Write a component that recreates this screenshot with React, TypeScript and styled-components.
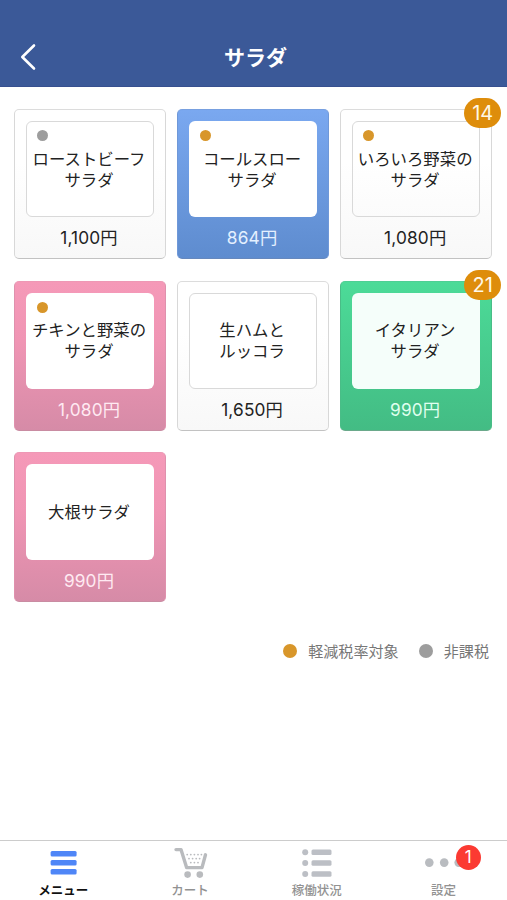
import React from "react";
import styled, { createGlobalStyle, css } from "styled-components";

type Tone = "white" | "blue" | "pink" | "green";
type Tax = "reduced" | "exempt";

const GlobalStyle = createGlobalStyle`
  * { box-sizing: border-box; }
  body {
    margin: 0;
    background: #fff;
    font-family: Inter, "Noto Sans CJK JP", sans-serif;
  }
`;

const Screen = styled.div`
  width: 507px;
  height: 900px;
  display: flex;
  flex-direction: column;
  background: #fff;
  overflow: hidden;
`;

const Header = styled.header`
  height: 87px;
  flex: none;
  display: grid;
  grid-template-columns: 60px 1fr 56px;
  align-items: center;
  padding-top: 27px;
  background: #3b5998;
  border-bottom: 1px solid #37508f;
`;

const BackButton = styled.button`
  display: flex;
  border: 0;
  padding: 0 0 0 19px;
  background: none;
`;

const Title = styled.h1`
  margin: 0;
  padding-bottom: 2px;
  text-align: center;
  color: #fff;
  font-size: 21px;
  line-height: 30px;
  font-weight: 700;
  font-family: "Noto Sans CJK JP", sans-serif;
`;

const Main = styled.main`
  flex: 1;
  padding: 22px 15px 0 14px;
`;

const Grid = styled.div`
  display: grid;
  grid-template-columns: repeat(3, 152px);
  grid-auto-rows: 150px;
  gap: 21.6px 11.1px;
`;

const tones = {
  white: css`
    background: linear-gradient(#fff 35%, #f8f8f8);
    border-color: #dcdcdc #d8d8d8 #c2c2c2;
    color: #222;
  `,
  blue: css`
    background: linear-gradient(#7aa8f0, #5e8ccf);
    border-color: #78a0e0 #6f98d8 #6688bd;
    color: #e4f0ff;
  `,
  pink: css`
    background: linear-gradient(#f599b8, #f095b4 40%, #d68ba7);
    border-color: #ee98b5 #df91ad #c98ca2;
    color: #ffeaf2;
  `,
  green: css`
    background: linear-gradient(#4cdb98, #43bc84);
    border-color: #4fcf94 #49bd87 #6aa98b;
    color: #e0ffef;
  `,
};

const Card = styled.article<{ $tone: Tone }>`
  position: relative;
  display: flex;
  flex-direction: column;
  align-items: center;
  padding-top: 11px;
  border: 1px solid;
  border-bottom-width: 1.5px;
  border-radius: 5px;
  ${({ $tone }) => tones[$tone]}
`;

const Label = styled.div<{ $tone: Tone; $sheer?: boolean }>`
  position: relative;
  width: 128px;
  height: 96px;
  flex: none;
  display: flex;
  align-items: center;
  justify-content: center;
  padding: 0 2px 1px 0;
  text-align: center;
  white-space: pre;
  color: #222;
  font-family: "Noto Sans CJK JP", sans-serif;
  font-size: 16.4px;
  line-height: 21px;
  border-radius: 6px;
  border: 1px solid ${({ $tone }) => ($tone === "white" ? "#d9d9d9" : "transparent")};
  background: ${({ $tone, $sheer }) =>
    $sheer ? "transparent" : $tone === "green" ? "#f5fefa" : "#fff"};
  background-clip: border-box;
`;

const Dot = styled.span<{ $tax: Tax; $size: number }>`
  flex: none;
  width: ${({ $size }) => $size}px;
  height: ${({ $size }) => $size}px;
  border-radius: 50%;
  background: ${({ $tax }) => ($tax === "reduced" ? "#d8962a" : "#9d9d9d")};
`;

const DotCorner = styled.span`
  position: absolute;
  top: 8px;
  left: 9.5px;
  display: flex;
`;

const Price = styled.div`
  margin-top: 9px;
  padding-right: 2px;
  font-size: 17.3px;
  line-height: 24px;
  letter-spacing: 0.15px;
`;

const Count = styled.span`
  position: absolute;
  top: -12px;
  right: -10px;
  width: 37px;
  height: 30px;
  border-radius: 15px;
  background: #de8d0b;
  color: #fff8e8;
  text-align: center;
  font-size: 20px;
  line-height: 30px;
`;

const Legend = styled.div`
  display: flex;
  align-items: center;
  justify-content: flex-end;
  height: 24px;
  margin-top: 37px;
  padding-right: 3px;
  color: #777;
  font-family: "Noto Sans CJK JP", sans-serif;
  font-size: 15.1px;
  line-height: 22px;
`;

const LegendItem = styled.span`
  display: flex;
  align-items: center;
  gap: 11px;
  margin-left: 20px;
`;

const LegendText = styled.span`
  padding-bottom: 2px;
`;

const TabBar = styled.nav`
  flex: none;
  height: 60px;
  display: grid;
  grid-template-columns: repeat(4, 1fr);
  border-top: 1px solid #ccc;
  background: #fff;
`;

const Tab = styled.button<{ $active?: boolean }>`
  display: flex;
  flex-direction: column;
  align-items: center;
  padding: 4px 0 0;
  border: 0;
  background: none;
  color: ${({ $active }) => ($active ? "#111" : "#929292")};
  font-family: "Noto Sans CJK JP", sans-serif;
  font-weight: ${({ $active }) => ($active ? 700 : 500)};
  font-size: 12.5px;
  line-height: 18px;
`;

const IconSlot = styled.span`
  position: relative;
  display: flex;
  height: 36px;
`;

const Alert = styled.span`
  position: absolute;
  left: 30px;
  top: 0;
  width: 25px;
  height: 25px;
  border-radius: 50%;
  background: #fb3a32;
  color: #fff;
  font-family: Inter, sans-serif;
  font-weight: 400;
  font-size: 17px;
  line-height: 25px;
  text-align: center;
`;

const Icon = styled.svg`
  overflow: visible;
`;

const MenuIcon = () => (
  <Icon width="36" height="36" viewBox="0 0 36 36" fill="#4f86f7">
    <rect x="5.6" y="6" width="26" height="5.4" rx="1.5" />
    <rect x="5.6" y="15" width="26" height="5.4" rx="1.5" />
    <rect x="5.6" y="24" width="26" height="5.4" rx="1.5" />
  </Icon>
);

const CartIcon = () => (
  <Icon width="36" height="36" viewBox="0 0 36 36" fill="#b9bbbe">
    <path
      d="M4 4.6H9L14.6 22.6H30L33.5 9.8"
      fill="none"
      stroke="#b9bbbe"
      strokeWidth="3.4"
      strokeLinecap="round"
      strokeLinejoin="round"
    />
    <circle cx="15.6" cy="29.6" r="3.3" />
    <circle cx="27.8" cy="29.6" r="3.3" />
    {[15.2, 18.8, 22.4, 26, 29.4].map((x) => (
      <circle key={x} cx={x} cy="9.6" r="0.9" />
    ))}
    {[17, 20.6, 24.2, 27.6].map((x) => (
      <circle key={x} cx={x} cy="13.6" r="0.9" />
    ))}
    {[18.8, 22.4, 26].map((x) => (
      <circle key={x} cx={x} cy="17.6" r="0.9" />
    ))}
  </Icon>
);

const ListIcon = () => (
  <Icon width="36" height="36" viewBox="0 0 36 36" fill="#bcbfc5">
    {[7.2, 18, 29].map((y) => (
      <React.Fragment key={y}>
        <circle cx="6.2" cy={y} r="3" />
        <rect x="12.5" y={y - 2.8} width="20" height="5.6" rx="1.5" />
      </React.Fragment>
    ))}
  </Icon>
);

const MoreIcon = () => (
  <Icon width="36" height="36" viewBox="0 0 36 36" fill="#b9bcc0">
    <circle cx="3.3" cy="17.6" r="4.3" />
    <circle cx="18.2" cy="17.6" r="4.3" />
    <circle cx="32.7" cy="17.6" r="4.3" />
  </Icon>
);

interface Item {
  name: string;
  price: string;
  tone: Tone;
  tax?: Tax;
  count?: number;
}

const items: Item[] = [
  { name: "ローストビーフ\nサラダ", price: "1,100円", tone: "white", tax: "exempt" },
  { name: "コールスロー\nサラダ", price: "864円", tone: "blue", tax: "reduced" },
  { name: "いろいろ野菜の\nサラダ", price: "1,080円", tone: "white", tax: "reduced", count: 14 },
  { name: "チキンと野菜の\nサラダ", price: "1,080円", tone: "pink", tax: "reduced" },
  { name: "生ハムと\nルッコラ", price: "1,650円", tone: "white" },
  { name: "イタリアン\nサラダ", price: "990円", tone: "green", count: 21 },
  { name: "大根サラダ", price: "990円", tone: "pink" },
];

const tabs = [
  { label: "メニュー", icon: <MenuIcon />, active: true },
  { label: "カート", icon: <CartIcon /> },
  { label: "稼働状況", icon: <ListIcon /> },
  { label: "設定", icon: <MoreIcon />, alert: 1 },
];

export default function App() {
  return (
    <>
      <GlobalStyle />
      <Screen>
        <Header>
          <BackButton aria-label="戻る">
            <svg width="20" height="28" viewBox="0 0 20 28" fill="none">
              <path
                d="M15 2.5L3.3 14L15 25.5"
                stroke="#fff"
                strokeWidth="2.6"
                strokeLinecap="round"
                strokeLinejoin="round"
              />
            </svg>
          </BackButton>
          <Title>サラダ</Title>
        </Header>
        <Main>
          <Grid>
            {items.map((item) => (
              <Card key={item.name} $tone={item.tone}>
                <Label $tone={item.tone} $sheer={item.tone === "white" && !!item.count}>
                  {item.tax && (
                    <DotCorner>
                      <Dot $tax={item.tax} $size={11} />
                    </DotCorner>
                  )}
                  {item.name}
                </Label>
                <Price>{item.price}</Price>
                {item.count && <Count>{item.count}</Count>}
              </Card>
            ))}
          </Grid>
          <Legend>
            <LegendItem>
              <Dot $tax="reduced" $size={14} />
              <LegendText>軽減税率対象</LegendText>
            </LegendItem>
            <LegendItem>
              <Dot $tax="exempt" $size={14} />
              <LegendText>非課税</LegendText>
            </LegendItem>
          </Legend>
        </Main>
        <TabBar>
          {tabs.map((tab) => (
            <Tab key={tab.label} $active={tab.active}>
              <IconSlot>
                {tab.icon}
                {tab.alert && <Alert>{tab.alert}</Alert>}
              </IconSlot>
              {tab.label}
            </Tab>
          ))}
        </TabBar>
      </Screen>
    </>
  );
}
